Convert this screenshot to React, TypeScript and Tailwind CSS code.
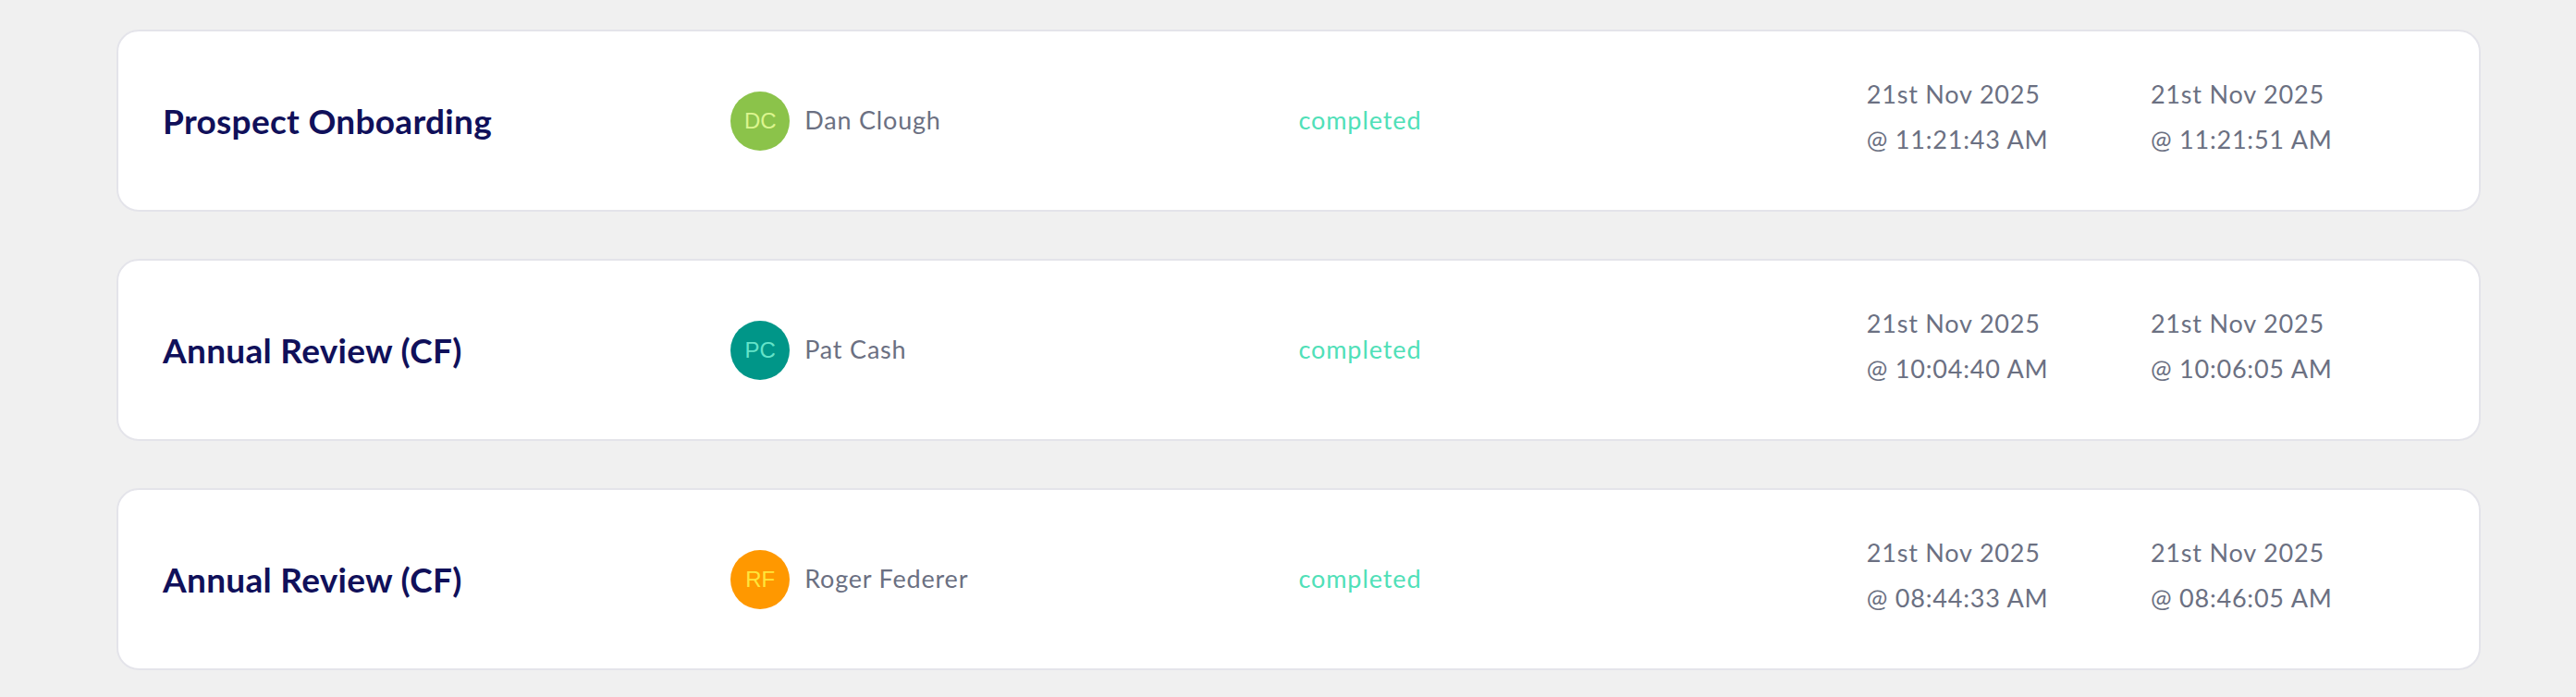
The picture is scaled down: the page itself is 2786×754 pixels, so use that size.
// Recent activity list: one card per workflow run, with title, assignee,
// status and the started / finished timestamps.

import type { ReactElement } from 'react'

type Run = {
  title: string
  initials: string
  name: string
  avatarBg: string
  avatarFg: string
  status: string
  started: [string, string]
  finished: [string, string]
}

const RUNS: readonly Run[] = [
  {
    title: 'Prospect Onboarding',
    initials: 'DC',
    name: 'Dan Clough',
    avatarBg: 'bg-[#8bc34a]',
    avatarFg: 'text-[#dcf58f]',
    status: 'completed',
    started: ['21st Nov 2025', '@ 11:21:43 AM'],
    finished: ['21st Nov 2025', '@ 11:21:51 AM'],
  },
  {
    title: 'Annual Review (CF)',
    initials: 'PC',
    name: 'Pat Cash',
    avatarBg: 'bg-[#009688]',
    avatarFg: 'text-[#64e3c9]',
    status: 'completed',
    started: ['21st Nov 2025', '@ 10:04:40 AM'],
    finished: ['21st Nov 2025', '@ 10:06:05 AM'],
  },
  {
    title: 'Annual Review (CF)',
    initials: 'RF',
    name: 'Roger Federer',
    avatarBg: 'bg-[#ff9800]',
    avatarFg: 'text-[#ffe53b]',
    status: 'completed',
    started: ['21st Nov 2025', '@ 08:44:33 AM'],
    finished: ['21st Nov 2025', '@ 08:46:05 AM'],
  },
]

export default function App(): ReactElement {
  return (
    <div className="min-h-screen w-full bg-[#f0f0f0] pl-[126px] pr-[103px] pt-[32px] pb-[29px] font-['Lato','Noto_Sans',sans-serif]">
      <div className="flex flex-col gap-[51px]">
        {RUNS.map((run, i) => (
          <RunCard key={i} run={run} />
        ))}
      </div>
    </div>
  )
}

function RunCard({ run }: { run: Run }): ReactElement {
  return (
    <div className="grid h-[197px] grid-cols-8 items-center rounded-[24px] border-2 border-[#e4e4ea] bg-white px-[48px]">
      <h2 className="col-span-2 text-[37px] font-bold tracking-[0.3px] text-[#10105a]">{run.title}</h2>
      <div className="col-span-2 flex items-center gap-[16px]">
        <span
          className={`inline-flex h-[64px] w-[64px] items-center justify-center rounded-full font-['Liberation_Sans',sans-serif] text-[24px] ${run.avatarBg} ${run.avatarFg}`}
        >
          {run.initials}
        </span>
        <span className="text-[27px] tracking-[0.8px] text-[#6b7082]">{run.name}</span>
      </div>
      <div className="col-span-2 text-[27px] tracking-[0.9px] text-[#50e0b8]">{run.status}</div>
      <Stamp lines={run.started} />
      <Stamp lines={run.finished} />
    </div>
  )
}

function Stamp({ lines }: { lines: [string, string] }): ReactElement {
  return (
    <div className="col-span-1 pb-[10px] text-[27px] leading-[49px] tracking-[0.8px] text-[#6b7082]">
      <div>{lines[0]}</div>
      <div>{lines[1]}</div>
    </div>
  )
}
